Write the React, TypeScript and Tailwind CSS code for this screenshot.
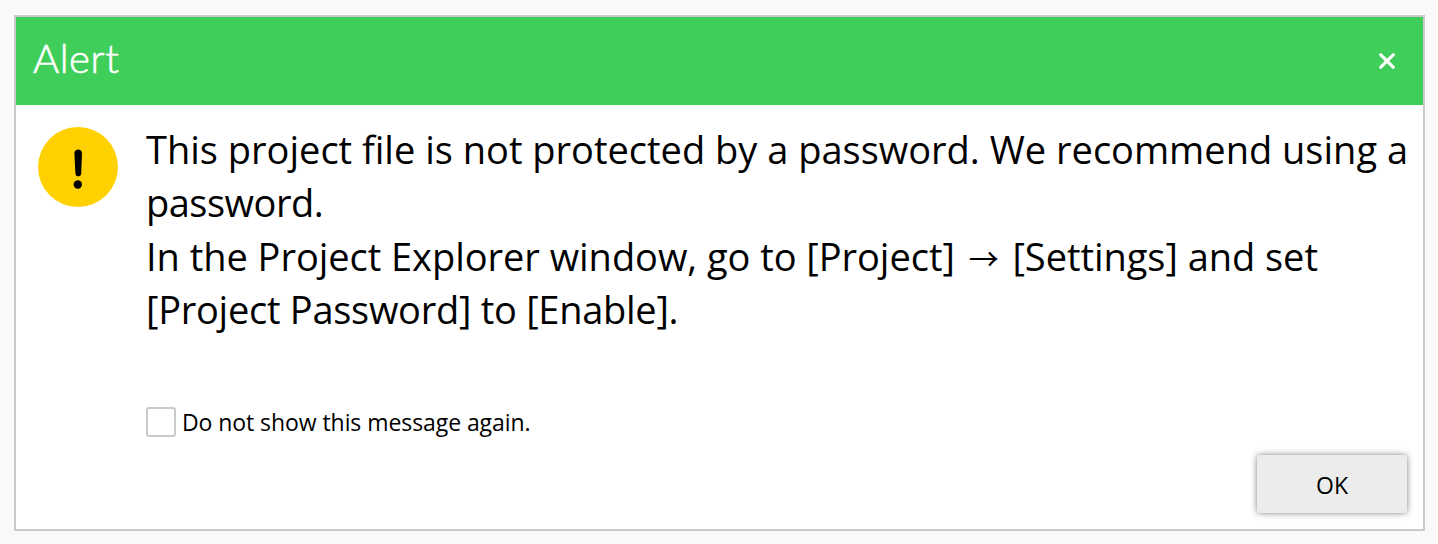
function TitleBar() {
  return (
    <header className="flex h-[88px] shrink-0 items-center justify-between bg-[#40ce5a] pl-[17px] pr-7">
      <h1 className="pb-[6px] font-['Lato',sans-serif] text-[40px] leading-[48px] font-light tracking-[0.6px] text-white [-webkit-text-stroke:0.6px_white]">Alert</h1>
      <button type="button" aria-label="Close" className="flex h-4 w-4 items-center justify-center">
        <svg width="16" height="16" viewBox="0 0 16 16" fill="none" stroke="#fff" strokeWidth="3.2" strokeLinecap="round">
          <path d="M1.8 1.8 14.2 14.2M14.2 1.8 1.8 14.2" />
        </svg>
      </button>
    </header>
  );
}

function WarningIcon() {
  return (
    <svg className="mt-[22px] shrink-0" width="80" height="80" viewBox="0 0 80 80">
      <circle cx="40" cy="40" r="40" fill="#ffd100" />
      <path d="M36.4 26.2C36.4 21.4 44 21.4 44 26.2L43.2 46.4C43 50.2 37.6 50.2 37.4 46.4Z" fill="#000" />
      <circle cx="39.8" cy="57.5" r="4.2" fill="#000" />
    </svg>
  );
}

export default function App() {
  return (
    <main className="h-[544px] w-[1438px] bg-[#f9f9f9] pt-[15px] pl-[14px] font-['Open_Sans',sans-serif] text-black">
      <section role="alertdialog" className="flex h-[516px] w-[1411px] flex-col border-2 border-[#cacaca] bg-white">
        <TitleBar />
        <div className="flex flex-1 pl-[22px]">
          <WarningIcon />
          <div className="ml-[28px] flex min-w-0 flex-1 flex-col">
            <div className="mt-[18px] text-[38px] leading-[53.4px] whitespace-nowrap">
              <p>This project file is not protected by a password. We recommend using a</p>
              <p className="tracking-[-0.5px]">password.</p>
              <p className="tracking-[-0.04px]">
                In the Project Explorer window, go to [Project] <span className="inline-block w-[38px] text-center align-[1px] font-['Noto_Sans_CJK_JP',sans-serif] text-[30px] leading-none">→</span> [Settings] and set
              </p>
              <p className="tracking-[-0.27px]">[Project Password] to [Enable].</p>
            </div>
            <label className="mt-[70px] flex h-[30px] items-center gap-[6px]">
              <input type="checkbox" className="h-[30px] w-[30px] appearance-none rounded-[3px] border-2 border-[#cacaca] bg-white" />
              <span className="text-[23px] leading-[30px] tracking-[-0.07px] whitespace-nowrap">Do not show this message again.</span>
            </label>
            <button
              type="button"
              className="mt-[18px] mr-[16px] h-[58px] w-[150px] self-end rounded-[3px] bg-[#ececec] pt-[3px] text-[23px] shadow-[0_0_6px_rgba(0,0,0,0.5)]"
            >
              OK
            </button>
          </div>
        </div>
      </section>
    </main>
  );
}
